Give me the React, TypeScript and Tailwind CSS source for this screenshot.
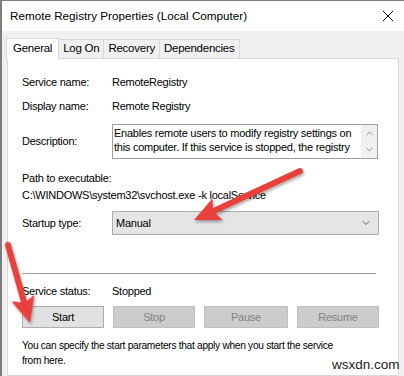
import { ChevronDown, ChevronUp } from "lucide-react";

const FONT = { fontFamily: '"Liberation Sans", Arial, sans-serif' };

const TABS = ["General", "Log On", "Recovery", "Dependencies"];

function Arrow({ x1, y1, x2, y2 }: { x1: number; y1: number; x2: number; y2: number }) {
  const angle = (Math.atan2(y2 - y1, x2 - x1) * 180) / Math.PI;
  const len = Math.hypot(x2 - x1, y2 - y1);
  return (
    <g transform={`translate(${x1} ${y1}) rotate(${angle})`}>
      <line x1={0} y1={0} x2={len - 18} y2={0} stroke="#e8413d" strokeWidth={6} strokeLinecap="round" />
      <polygon points={`${len},0 ${len - 26},-12 ${len - 21},0 ${len - 26},12`} fill="#e8413d" />
    </g>
  );
}

export default function App() {
  return (
    <div
      style={FONT}
      className="relative flex h-[376px] w-[404px] flex-col overflow-hidden border-l-2 border-t border-[#7c7c7c] bg-[#f0f0f0] text-[11px] tracking-[-0.25px] text-black"
    >
      <header className="flex h-[30px] shrink-0 items-center justify-between bg-white pl-[8px] pr-[8px] tracking-normal">
        <span className="text-[11.7px]">Remote Registry Properties (Local Computer)</span>
        <svg width="12" height="12" viewBox="0 0 12 12" className="mr-[2px]">
          <path d="M1 1 L11 11 M11 1 L1 11" stroke="#111" strokeWidth="1" />
        </svg>
      </header>

      <div className="mt-[7px] flex h-[20px] items-end pl-[4px] text-[11.5px]">
        {TABS.map((tab, i) => (
          <div
            key={tab}
            className={
              i === 0
                ? "relative z-10 -mb-px flex h-[21px] items-center border border-b-0 border-[#d9d9d9] bg-white px-[6px]"
                : "flex h-[19px] items-center border border-b-0 border-l-0 border-[#d9d9d9] bg-[#f0f0f0] px-[4px]"
            }
          >
            {tab}
          </div>
        ))}
      </div>

      <section className="mx-[5px] flex flex-1 flex-col border border-[#d9d9d9] bg-white pl-[14px] pr-[18px] pt-[16px]">
        <div className="flex h-[15px] items-center">
          <span className="w-[90px]">Service name:</span>
          <span>RemoteRegistry</span>
        </div>
        <div className="mt-[9px] flex h-[15px] items-center">
          <span className="w-[90px]">Display name:</span>
          <span>Remote Registry</span>
        </div>
        <div className="mt-[10px] flex items-center">
          <span className="w-[90px]">Description:</span>
          <div className="flex h-[35px] w-[266px] border border-[#a0a0a0] bg-white">
            <p className="flex-1 overflow-hidden whitespace-nowrap pl-[1px] pt-[1px] leading-[14px]">
              Enables remote users to modify registry settings on
              <br />
              this computer. If this service is stopped, the registry
            </p>
            <div className="flex w-[16px] flex-col items-center justify-between bg-[#f0f0f0] py-[3px] text-[#606060]">
              <ChevronUp size={11} strokeWidth={1.5} />
              <ChevronDown size={11} strokeWidth={1.5} />
            </div>
          </div>
        </div>
        <div className="mt-[11px] h-[15px]">Path to executable:</div>
        <div className="mt-[2px] h-[15px] whitespace-nowrap">C:\WINDOWS\system32\svchost.exe -k localService</div>
        <div className="mt-[9px] flex items-center">
          <span className="w-[90px]">Startup type:</span>
          <div className="flex h-[24px] w-[267px] items-center justify-between border border-[#adadad] bg-[#e5e5e5] pl-[3px] pr-[6px]">
            <span>Manual</span>
            <ChevronDown size={12} strokeWidth={1.5} className="text-[#333]" />
          </div>
        </div>
        <div className="mt-[38px] h-px w-[354px] bg-[#a0a0a0]" />
        <div className="mt-[10px] flex h-[15px] items-center">
          <span className="w-[90px]">Service status:</span>
          <span>Stopped</span>
        </div>
        <div className="mt-[7px] flex gap-[9px]">
          <button className="h-[22px] w-[82px] border border-[#adadad] bg-[#e1e1e1]">Start</button>
          <button className="h-[22px] w-[82px] border border-[#bfbfbf] bg-[#cccccc] text-[#838383]">Stop</button>
          <button className="h-[22px] w-[84px] border border-[#bfbfbf] bg-[#cccccc] text-[#838383]">Pause</button>
          <button className="h-[22px] w-[82px] border border-[#bfbfbf] bg-[#cccccc] text-[#838383]">Resume</button>
        </div>
        <p className="mt-[10px] w-[350px] whitespace-nowrap text-[10.2px] leading-[15px] tracking-[-0.3px]">
          You can specify the start parameters that apply when you start the service
          <br />
          from here.
        </p>
      </section>

      <span className="absolute left-[330px] top-[354px] text-[13.5px] tracking-normal text-[#222]">wsxdn.com</span>

      <svg className="pointer-events-none absolute left-0 top-0" width="404" height="376">
        <defs>
          <filter id="sh" x="-20%" y="-20%" width="140%" height="140%">
            <feDropShadow dx="1" dy="2" stdDeviation="1.5" floodColor="#000" floodOpacity="0.35" />
          </filter>
        </defs>
        <g filter="url(#sh)">
          <Arrow x1={298} y1={170} x2={192} y2={219} />
          <Arrow x1={6} y1={244} x2={28} y2={322} />
        </g>
      </svg>
    </div>
  );
}
